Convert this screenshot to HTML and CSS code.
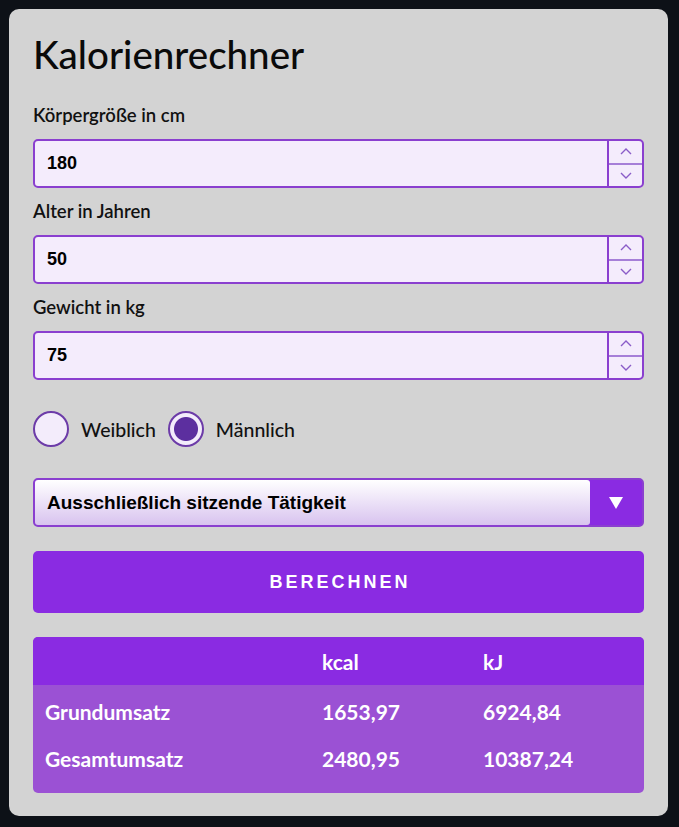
FILE: index.html
```html
<!DOCTYPE html>
<html lang="de">
<head>
<meta charset="utf-8">
<title>Kalorienrechner</title>
<link rel="stylesheet" href="styles.css">
</head>
<body>
<div class="card">
  <h1 class="title">Kalorienrechner</h1>

  <div class="group">
    <label class="label" for="h">Körpergröße in cm</label>
    <div class="field">
      <input class="num" id="h" type="text" value="180">
      <div class="spin">
        <span class="spin-btn"><svg width="12" height="7" viewBox="0 0 12 7"><path d="M1 6 L6 1 L11 6" fill="none" stroke="#8a5cc8" stroke-width="1.4"/></svg></span>
        <span class="spin-btn spin-down"><svg width="12" height="7" viewBox="0 0 12 7"><path d="M1 1 L6 6 L11 1" fill="none" stroke="#8a5cc8" stroke-width="1.4"/></svg></span>
      </div>
    </div>
  </div>

  <div class="group">
    <label class="label" for="a">Alter in Jahren</label>
    <div class="field">
      <input class="num" id="a" type="text" value="50">
      <div class="spin">
        <span class="spin-btn"><svg width="12" height="7" viewBox="0 0 12 7"><path d="M1 6 L6 1 L11 6" fill="none" stroke="#8a5cc8" stroke-width="1.4"/></svg></span>
        <span class="spin-btn spin-down"><svg width="12" height="7" viewBox="0 0 12 7"><path d="M1 1 L6 6 L11 1" fill="none" stroke="#8a5cc8" stroke-width="1.4"/></svg></span>
      </div>
    </div>
  </div>

  <div class="group">
    <label class="label" for="w">Gewicht in kg</label>
    <div class="field">
      <input class="num" id="w" type="text" value="75">
      <div class="spin">
        <span class="spin-btn"><svg width="12" height="7" viewBox="0 0 12 7"><path d="M1 6 L6 1 L11 6" fill="none" stroke="#8a5cc8" stroke-width="1.4"/></svg></span>
        <span class="spin-btn spin-down"><svg width="12" height="7" viewBox="0 0 12 7"><path d="M1 1 L6 6 L11 1" fill="none" stroke="#8a5cc8" stroke-width="1.4"/></svg></span>
      </div>
    </div>
  </div>

  <div class="radios">
    <label class="radio"><input type="radio" name="g" class="radio-in"><span>Weiblich</span></label>
    <label class="radio"><input type="radio" name="g" class="radio-in" checked><span>Männlich</span></label>
  </div>

  <div class="select-wrap">
    <select class="select">
      <option>Ausschließlich sitzende Tätigkeit</option>
    </select>
    <div class="select-arrow"><svg width="14" height="12" viewBox="0 0 14 12"><path d="M0 0 H14 L7 12 Z" fill="#fff"/></svg></div>
  </div>

  <button class="btn" type="button">BERECHNEN</button>

  <div class="result">
    <table class="table">
      <thead>
        <tr><th class="c1"></th><th class="c2">kcal</th><th>kJ</th></tr>
      </thead>
      <tbody>
        <tr class="first"><td>Grundumsatz</td><td>1653,97</td><td>6924,84</td></tr>
        <tr><td>Gesamtumsatz</td><td>2480,95</td><td>10387,24</td></tr>
      </tbody>
    </table>
  </div>
</div>
</body>
</html>
```

FILE: styles.css
```css
html, body {
  margin: 0;
  background: #0d1117;
}
body {
  padding: 9px 0 11px 9px;
  font-family: Lato, "Open Sans", sans-serif;
}
.card {
  width: 659px;
  box-sizing: border-box;
  background: #d3d3d3;
  border-radius: 10px;
  padding: 24px 24px 23px;
}
.title {
  margin: 0 0 29px;
  font: 500 38.5px/43px Lato, sans-serif;
  color: #0a0a0a;
}
.group {
  margin-bottom: 13px;
}
.label {
  display: block;
  font: 600 18.5px/20px Lato, sans-serif;
  color: #111;
  margin-bottom: 14px;
}
.field {
  display: flex;
  height: 49px;
  box-sizing: border-box;
  border: 2px solid #8a3fcf;
  border-radius: 5px;
  background: #f4ecfc;
  overflow: hidden;
}
.num {
  flex: 1;
  min-width: 0;
  border: none;
  outline: none;
  background: transparent;
  padding: 0 12px;
  font: 700 18px "Liberation Sans", Arial, sans-serif;
  color: #000;
}
.spin {
  width: 33px;
  border-left: 2px solid #8a3fcf;
  display: flex;
  flex-direction: column;
}
.spin-btn {
  flex: 1;
  display: flex;
  align-items: center;
  justify-content: center;
}
.spin-down {
  border-top: 2px solid #a67fd8;
}
.radios {
  display: flex;
  align-items: center;
  gap: 12px;
  margin-top: 31px;
  height: 36px;
}
.radio {
  display: flex;
  align-items: center;
  gap: 12px;
  font: 500 19.5px Lato, sans-serif;
  color: #111;
}
.radio-in {
  appearance: none;
  -webkit-appearance: none;
  margin: 0;
  width: 36px;
  height: 36px;
  box-sizing: border-box;
  border: 2px solid #6c3ba8;
  border-radius: 50%;
  background: #f3ecfb;
}
.radio-in:checked {
  background: radial-gradient(circle, #5c2f9f 0 11.5px, #f3ecfb 12.5px);
}
.select-wrap {
  display: flex;
  margin-top: 31px;
  height: 49px;
  box-sizing: border-box;
  border: 2px solid #8a3fcf;
  border-radius: 5px;
  background: #8a2be2;
  overflow: hidden;
}
.select {
  flex: 1;
  appearance: none;
  -webkit-appearance: none;
  border: none;
  outline: none;
  border-radius: 0 3px 3px 0;
  background: linear-gradient(#ffffff, #d8c3ef);
  padding: 0 12px;
  font: 700 19px "Liberation Sans", Arial, sans-serif;
  color: #000;
}
.select-arrow {
  width: 52px;
  display: flex;
  align-items: center;
  justify-content: center;
}
.btn {
  display: block;
  width: 100%;
  margin-top: 24px;
  height: 62px;
  border: none;
  border-radius: 5px;
  background: #8a2be2;
  color: #fff;
  font: 700 18px "Liberation Sans", Arial, sans-serif;
  letter-spacing: 3px;
  padding: 0 0 0 3px;
}
.result {
  margin-top: 24px;
  border-radius: 5px;
  overflow: hidden;
  background: #9b51d4;
  padding-bottom: 11px;
}
.table {
  width: 100%;
  border-collapse: collapse;
  color: #fff;
  font: 700 21px Lato, sans-serif;
}
.table th {
  background: #8a2be2;
  height: 48px;
  padding: 0 12px;
  text-align: left;
  font-weight: 700;
}
.table .c1 { width: 253px; }
.table .c2 { width: 137px; }
.table td {
  height: 47px;
  padding: 0 12px;
}
.table tr.first td {
  padding-top: 3px;
}
```
